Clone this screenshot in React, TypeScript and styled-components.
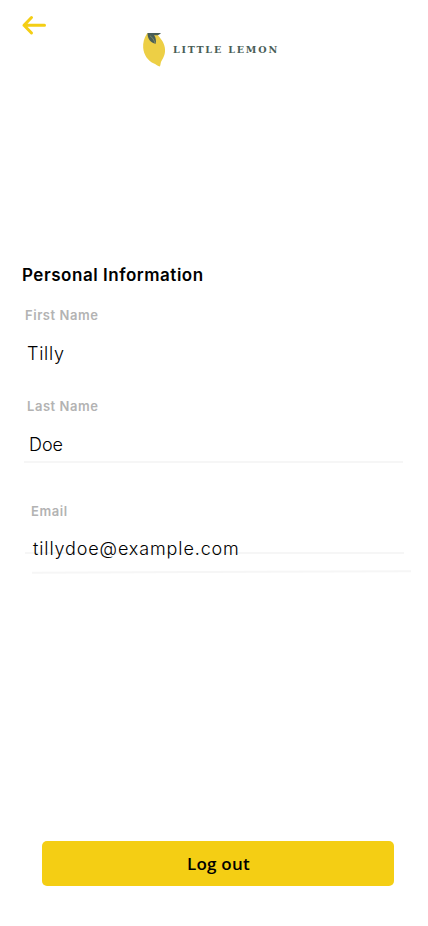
import React from 'react';
import styled, { createGlobalStyle } from 'styled-components';

const GlobalStyle = createGlobalStyle`
  * { box-sizing: border-box; }
  body { margin: 0; background: #fff; }
`;

const Screen = styled.main`
  display: flex;
  flex-direction: column;
  width: 428px;
  height: 926px;
  overflow: hidden;
  background: #fff;
  color: #000;
  font-family: Inter, sans-serif;
`;

const Header = styled.header`
  display: flex;
  align-items: flex-start;
  height: 263px;
  padding-left: 20px;
`;

const BackButton = styled.button`
  display: flex;
  width: 28px;
  height: 24px;
  margin-top: 13px;
  padding: 0;
  border: 0;
  background: none;
`;

const Brand = styled.div`
  display: flex;
  align-items: center;
  gap: 7px;
  margin: 32px 0 0 94px;
`;

const BrandName = styled.span`
  font: 700 9.6px/14px 'DejaVu Serif', serif;
  letter-spacing: 1.8px;
  color: #495e57;
  white-space: nowrap;
`;

const Heading = styled.h1`
  margin: 0 0 0 22px;
  height: 24px;
  font-size: 17px;
  line-height: 24px;
  font-weight: 600;
  letter-spacing: 0.53px;
`;

const Field = styled.label<{ $inset: number; $gap: number }>`
  display: flex;
  flex-direction: column;
  margin: ${p => p.$gap}px 0 0 ${p => p.$inset}px;
`;

const FieldName = styled.span`
  height: 18px;
  font-size: 13px;
  line-height: 19px;
  font-weight: 600;
  letter-spacing: 0.55px;
  color: #b3b3b3;
`;

const FieldValue = styled.span<{ $track?: number; $top?: number }>`
  position: relative;
  z-index: 1;
  height: 28px;
  margin: 16px 0 0 2px;
  font-size: 18px;
  line-height: ${p => p.$top ?? 27}px;
  font-weight: 350;
  letter-spacing: ${p => p.$track ?? 0}px;
`;

const Divider = styled.hr<{ $inset: number; $gap: number; $tilt?: number }>`
  flex: none;
  width: 379px;
  height: 2px;
  margin: ${p => p.$gap}px 0 0 ${p => p.$inset}px;
  border: 0;
  background: #f6f6f6;
  transform: rotate(${p => p.$tilt ?? 0}deg);
`;

const LogoutButton = styled.button`
  width: 352px;
  height: 45px;
  margin: auto 0 40px 42px;
  padding: 1px 0 0 1px;
  border: 0;
  border-radius: 5px;
  background: #f4ce14;
  color: #000;
  font: 600 17px/24px 'Open Sans', sans-serif;
  letter-spacing: 0.2px;
`;

const ArrowIcon = () => (
  <svg width="28" height="24" viewBox="0 0 28 24" fill="none" stroke="#f4ce14" strokeWidth="3" strokeLinecap="round" strokeLinejoin="round">
    <path d="M24.5 12.2H4M11.5 4.5L4 12.2L11.5 20" />
  </svg>
);

const LemonIcon = () => (
  <svg width="24" height="36" viewBox="0 0 24 36">
    <path d="M5 1.5C2 6 .8 11 1.2 16C1.8 23 6 29 12 31.5C14 32.3 16 34.2 17.7 34.5C18.5 34 18.5 31 19.2 29.5C22 25 23.7 21 22.8 15.5C22 10 18.5 6.5 16 3.2C14 1 7 .5 5 1.5Z" fill="#edcf45" />
    <path d="M5.5 1H19C17.5 3 15.5 3.5 12 3.2C14 5.5 14.3 8.5 13.7 11.8C8.5 10.8 5.5 7 5.5 1Z" fill="#495e57" />
    <path d="M8 3.8C10.5 5.5 12 8 13 11" fill="none" stroke="#98a06a" strokeWidth=".7" />
  </svg>
);

export default function App() {
  return (
    <Screen>
      <GlobalStyle />
      <Header>
        <BackButton aria-label="Back"><ArrowIcon /></BackButton>
        <Brand>
          <LemonIcon />
          <BrandName>LITTLE LEMON</BrandName>
        </Brand>
      </Header>
      <Heading>Personal Information</Heading>
      <Field $inset={25} $gap={19}>
        <FieldName>First Name</FieldName>
        <FieldValue $track={0.7}>Tilly</FieldValue>
      </Field>
      <Field $inset={27} $gap={29}>
        <FieldName>Last Name</FieldName>
        <FieldValue>Doe</FieldValue>
      </Field>
      <Divider $inset={24} $gap={2} />
      <Field $inset={31} $gap={39}>
        <FieldName>Email</FieldName>
        <FieldValue $track={0.87} $top={25}>tillydoe@example.com</FieldValue>
      </Field>
      <Divider $inset={25} $gap={-12} />
      <Divider $inset={32} $gap={17} $tilt={-0.25} />
      <LogoutButton>Log out</LogoutButton>
    </Screen>
  );
}
